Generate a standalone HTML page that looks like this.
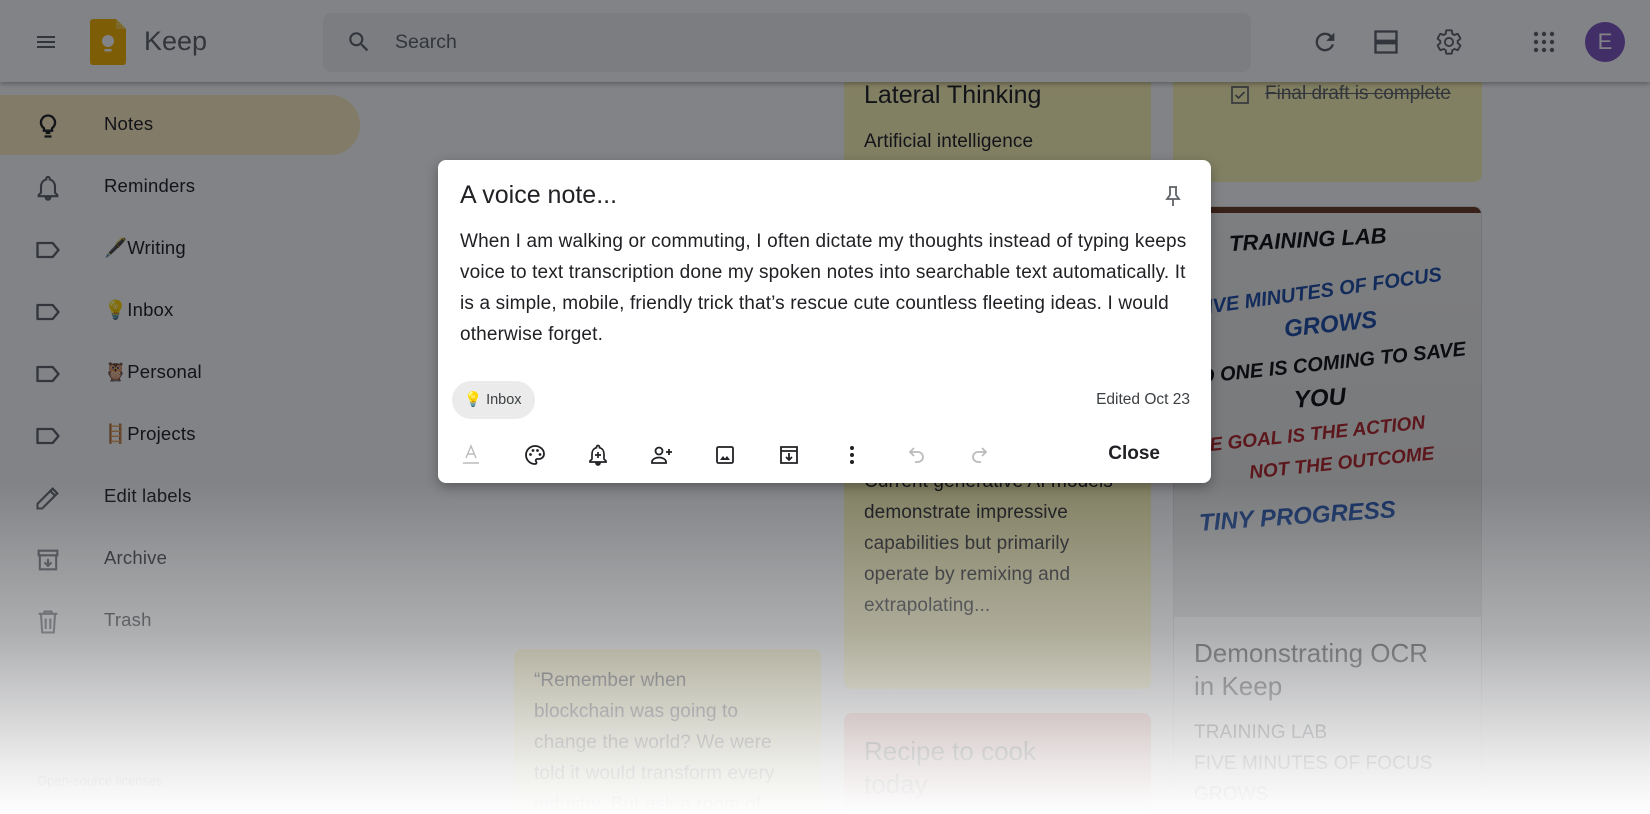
<!DOCTYPE html>
<html><head><meta charset="utf-8"><style>
*{margin:0;padding:0;box-sizing:border-box}
html{width:1650px;height:814px;overflow:hidden}
body{width:1650px;height:814px;overflow:hidden;background:#fff;font-family:"Liberation Sans","Noto Sans CJK SC",sans-serif;color:#202124;position:relative}
.abs{position:absolute}
.hdr{left:0;top:0;width:1650px;height:82px;background:#fff;box-shadow:0 2px 5px rgba(0,0,0,.3)}
.side .it{position:absolute;left:0;width:360px;height:60px}
.side .it svg{position:absolute;left:34px;top:18px}
.side .it span{position:absolute;left:104px;top:19px;font-size:18.5px;letter-spacing:.2px;color:#202124}
.card{position:absolute;border-radius:8px;overflow:hidden}
.y{background:#fff8b8}
.ct{font-size:19px;line-height:31px;color:#202124;letter-spacing:.1px}
.hw{position:absolute;font-family:"Liberation Sans",sans-serif;font-weight:bold;font-style:italic;white-space:nowrap}
.tb svg{position:absolute;top:443px}
</style></head><body>
<!-- cards -->
<div class="card y" style="left:844px;top:40px;width:307px;height:649px">
<div class="abs" style="left:20px;top:41px;font-size:25px">Lateral Thinking</div>
<div class="abs ct" style="left:20px;top:86px">Artificial intelligence</div>
<div class="abs ct" style="left:20px;top:426px;width:260px">Current generative AI models demonstrate impressive capabilities but primarily operate by remixing and extrapolating...</div>
</div>
<div class="card y" style="left:1173px;top:40px;width:309px;height:142px">
<svg class="abs" style="left:57px;top:45px" width="20" height="20" viewBox="0 0 20 20"><rect x="2" y="2" width="16" height="16" fill="none" stroke="#5f6368" stroke-width="1.6"/><path d="M5.5 10l3 3 6-6" fill="none" stroke="#5f6368" stroke-width="1.6"/></svg>
<div class="abs" style="left:92px;top:43px;font-size:19px;color:#5f6368;text-decoration:line-through">Final draft is complete</div>
</div>
<div class="card" style="left:1173px;top:206px;width:309px;height:640px;border:1px solid #e0e0e0;background:#fff">
<div class="abs" style="left:0;top:0;width:309px;height:410px;background:linear-gradient(#f4f4f2,#e9e9e7);border-top:6px solid #6b3a22">
<div class="hw" style="left:55px;top:14px;font-size:22px;color:#111;transform:rotate(-3deg)">TRAINING LAB</div>
<div class="hw" style="left:20px;top:68px;font-size:20px;color:#1f4fa8;transform:rotate(-8deg)">FIVE MINUTES OF FOCUS</div>
<div class="hw" style="left:110px;top:98px;font-size:24px;color:#1f4fa8;transform:rotate(-6deg)">GROWS</div>
<div class="hw" style="left:10px;top:140px;font-size:20px;color:#111;transform:rotate(-6deg)">NO ONE IS COMING TO SAVE</div>
<div class="hw" style="left:120px;top:172px;font-size:24px;color:#111;transform:rotate(-4deg)">YOU</div>
<div class="hw" style="left:10px;top:212px;font-size:19px;color:#b3262b;transform:rotate(-6deg)">THE GOAL IS THE ACTION</div>
<div class="hw" style="left:75px;top:240px;font-size:19px;color:#b3262b;transform:rotate(-6deg)">NOT THE OUTCOME</div>
<div class="hw" style="left:25px;top:290px;font-size:24px;color:#1f4fa8;transform:rotate(-4deg)">TINY PROGRESS</div>
</div>
<div class="abs" style="left:20px;top:430px;width:250px;font-size:26px;line-height:33px;color:#202124">Demonstrating OCR in Keep</div>
<div class="abs ct" style="left:20px;top:510px">TRAINING LAB<br>FIVE MINUTES OF FOCUS<br>GROWS</div>
</div>
<div class="card y" style="left:514px;top:649px;width:307px;height:165px">
<div class="abs ct" style="left:20px;top:16px;white-space:nowrap">“Remember when<br>blockchain was going to<br>change the world? We were<br>told it would transform every<br>industry. But ask a room of</div>
</div>
<div class="card" style="left:844px;top:713px;width:307px;height:101px;background:#faafa8">
<div class="abs" style="left:20px;top:22px;font-size:26px;line-height:33px;color:#202124">Recipe to cook<br>today</div>
</div>
<!-- header -->
<div class="abs hdr">
<svg class="abs" style="left:34px;top:30px" width="24" height="24" viewBox="0 0 24 24"><path d="M3 18h18v-2H3v2zm0-5h18v-2H3v2zm0-7v2h18V6H3z" fill="#5f6368"/></svg>
<svg class="abs" style="left:90px;top:19px" width="36" height="46" viewBox="0 0 36 46"><path d="M3 0h23l10 10v33a3 3 0 0 1-3 3H3a3 3 0 0 1-3-3V3a3 3 0 0 1 3-3z" fill="#f4b400"/><path d="M26 0v10h10z" fill="#f7cb4d"/><circle cx="18" cy="22" r="6" fill="#fff"/><rect x="14.5" y="30" width="7" height="2.5" fill="#fff"/></svg>
<div class="abs" style="left:144px;top:26px;font-size:27px;color:#5f6368">Keep</div>
<div class="abs" style="left:323px;top:13px;width:928px;height:59px;background:#f1f3f4;border-radius:8px"></div>
<svg class="abs" style="left:346px;top:29px" width="26" height="26" viewBox="0 0 24 24"><path d="M15.5 14h-.79l-.28-.27A6.47 6.47 0 0 0 16 9.5 6.5 6.5 0 1 0 9.5 16c1.61 0 3.09-.59 4.23-1.57l.27.28v.79l5 4.99L20.49 19l-4.99-5zm-6 0C7.01 14 5 11.99 5 9.5S7.01 5 9.5 5 14 7.01 14 9.5 11.99 14 9.5 14z" fill="#5f6368"/></svg>
<div class="abs" style="left:395px;top:31px;font-size:19.5px;color:#5f6368">Search</div>
<svg class="abs" style="left:1311px;top:28px" width="28" height="28" viewBox="0 0 24 24"><path d="M17.65 6.35A7.96 7.96 0 0 0 12 4a8 8 0 1 0 7.73 10h-2.08A6 6 0 1 1 12 6c1.66 0 3.14.69 4.22 1.78L13 11h7V4l-2.35 2.35z" fill="#5f6368"/></svg>
<svg class="abs" style="left:1372px;top:28px" width="28" height="28" viewBox="0 0 24 24"><path d="M3 3h18v8H3zM3 13h18v8H3z" fill="none" stroke="#5f6368" stroke-width="2"/></svg>
<svg class="abs" style="left:1435px;top:28px" width="28" height="28" viewBox="0 0 24 24"><path d="M19.43 12.98c.04-.32.07-.64.07-.98s-.03-.66-.07-.98l2.11-1.65c.19-.15.24-.42.12-.64l-2-3.46a.5.5 0 0 0-.61-.22l-2.49 1c-.52-.4-1.08-.73-1.69-.98l-.38-2.65A.49.49 0 0 0 14 2h-4c-.25 0-.46.18-.49.42l-.38 2.65c-.61.25-1.17.59-1.69.98l-2.49-1a.5.5 0 0 0-.61.22l-2 3.46c-.13.22-.07.49.12.64l2.11 1.65c-.04.32-.07.65-.07.98s.03.66.07.98l-2.11 1.65c-.19.15-.24.42-.12.64l2 3.46c.12.22.39.3.61.22l2.49-1c.52.4 1.08.73 1.69.98l.38 2.65c.03.24.24.42.49.42h4c.25 0 .46-.18.49-.42l.38-2.65c.61-.25 1.17-.59 1.69-.98l2.49 1c.23.09.49 0 .61-.22l2-3.46c.12-.22.07-.49-.12-.64l-2.11-1.65zM12 15.5a3.5 3.5 0 1 1 0-7 3.5 3.5 0 0 1 0 7z" fill="none" stroke="#5f6368" stroke-width="1.6"/></svg>
<svg class="abs" style="left:1532px;top:30px" width="24" height="24" viewBox="0 0 24 24" fill="#5f6368"><circle cx="4" cy="4" r="2.2"/><circle cx="12" cy="4" r="2.2"/><circle cx="20" cy="4" r="2.2"/><circle cx="4" cy="12" r="2.2"/><circle cx="12" cy="12" r="2.2"/><circle cx="20" cy="12" r="2.2"/><circle cx="4" cy="20" r="2.2"/><circle cx="12" cy="20" r="2.2"/><circle cx="20" cy="20" r="2.2"/></svg>
<div class="abs" style="left:1585px;top:22px;width:40px;height:40px;border-radius:50%;background:#7e57c2;color:#fff;font-size:22px;text-align:center;line-height:40px">E</div>
</div>
<!-- sidebar -->
<div class="side">
<div class="abs" style="left:0;top:95px;width:360px;height:60px;background:#feefc3;border-radius:0 30px 30px 0"></div>
<div class="it" style="top:94px"><svg width="28" height="28" viewBox="0 0 24 24"><path d="M9 21h6M10 18h4M12 3a6 6 0 0 0-3.5 10.9V16h7v-2.1A6 6 0 0 0 12 3z" fill="none" stroke="#202124" stroke-width="2"/></svg><span>Notes</span></div>
<div class="it" style="top:156px"><svg width="28" height="28" viewBox="0 0 24 24"><path d="M12 22a2 2 0 0 0 2-2h-4a2 2 0 0 0 2 2zm6-6v-5c0-3.07-1.64-5.64-4.5-6.32V4a1.5 1.5 0 0 0-3 0v.68C7.63 5.36 6 7.92 6 11v5l-2 2v1h16v-1l-2-2z" fill="none" stroke="#5f6368" stroke-width="1.8"/></svg><span>Reminders</span></div>
<div class="it" style="top:218px"><svg width="28" height="28" viewBox="0 0 24 24"><path d="M3 6h13l5 6-5 6H3z" fill="none" stroke="#5f6368" stroke-width="2" stroke-linejoin="round"/></svg><span>🖋️Writing</span></div>
<div class="it" style="top:280px"><svg width="28" height="28" viewBox="0 0 24 24"><path d="M3 6h13l5 6-5 6H3z" fill="none" stroke="#5f6368" stroke-width="2" stroke-linejoin="round"/></svg><span>💡Inbox</span></div>
<div class="it" style="top:342px"><svg width="28" height="28" viewBox="0 0 24 24"><path d="M3 6h13l5 6-5 6H3z" fill="none" stroke="#5f6368" stroke-width="2" stroke-linejoin="round"/></svg><span>🦉Personal</span></div>
<div class="it" style="top:404px"><svg width="28" height="28" viewBox="0 0 24 24"><path d="M3 6h13l5 6-5 6H3z" fill="none" stroke="#5f6368" stroke-width="2" stroke-linejoin="round"/></svg><span>🪜Projects</span></div>
<div class="it" style="top:466px"><svg width="28" height="28" viewBox="0 0 24 24"><path d="M3 21v-4L16 4l4 4L7 21zM14 6l4 4" fill="none" stroke="#5f6368" stroke-width="1.8"/></svg><span>Edit labels</span></div>
<div class="it" style="top:528px"><svg width="28" height="28" viewBox="0 0 24 24"><path d="M4 4h16v4H4zM5 8h14v12H5zM12 11v6M9 14l3 3 3-3" fill="none" stroke="#5f6368" stroke-width="1.8"/></svg><span>Archive</span></div>
<div class="it" style="top:590px"><svg width="28" height="28" viewBox="0 0 24 24"><path d="M4 5h16M9 5V3h6v2M6 5l1 16h10l1-16M10 9v9M14 9v9" fill="none" stroke="#5f6368" stroke-width="1.8"/></svg><span>Trash</span></div>
<div class="abs" style="left:37px;top:773px;font-size:13px;color:#5f6368">Open-source licenses</div>
</div>
<!-- scrim -->
<div class="abs" style="left:0;top:0;width:1650px;height:814px;background:rgba(6,8,14,0.5)"></div>
<!-- modal -->
<div class="abs" style="left:438px;top:160px;width:773px;height:323px;background:#fff;border-radius:8px;box-shadow:0 4px 12px rgba(0,0,0,.3)">
<div class="abs" style="left:22px;top:21px;font-size:25px;color:#202124">A voice note...</div>
<svg class="abs" style="left:723px;top:24px" width="24" height="24" viewBox="0 0 24 24"><path d="M8 3h8M9 3v8l-3 4h12l-3-4V3M12 15v7" fill="none" stroke="#5f6368" stroke-width="1.8"/></svg>
<div class="abs" style="left:22px;top:66px;width:736px;font-size:19px;letter-spacing:.15px;line-height:31px;color:#202124">When I am walking or commuting, I often dictate my thoughts instead of typing keeps voice to text transcription done my spoken notes into searchable text automatically. It is a simple, mobile, friendly trick that’s rescue cute countless fleeting ideas. I would otherwise forget.</div>
<div class="abs" style="left:14px;top:221px;width:83px;height:38px;border-radius:19px;background:#ebebeb;font-size:14.5px;line-height:38px;padding-left:12px;color:#3c4043">💡 Inbox</div>
<div class="abs" style="right:21px;top:231px;font-size:15.5px;color:#3c4043">Edited Oct 23</div>
<div class="abs" style="right:51px;top:283px;font-size:19px;font-weight:bold;color:#202124">Close</div>
</div>
<div class="tb">
<svg style="left:461px" width="20" height="22" viewBox="0 0 20 22"><path d="M5 15l5-12 5 12M7 11h6" fill="none" stroke="#bbb" stroke-width="1.4"/><path d="M2 20h16" stroke="#ccc" stroke-width="2"/></svg>
<svg style="left:523px" width="24" height="24" viewBox="0 0 24 24"><path d="M12 3a9 9 0 0 0 0 18c1 0 1.5-.7 1.5-1.5 0-.4-.2-.7-.4-1-.2-.3-.4-.6-.4-1 0-.8.7-1.5 1.5-1.5H16a5 5 0 0 0 5-5c0-4.4-4-8-9-8z" fill="none" stroke="#202124" stroke-width="1.8"/><circle cx="7.5" cy="11.5" r="1.4" fill="#202124"/><circle cx="10" cy="7.5" r="1.4" fill="#202124"/><circle cx="14.5" cy="7.5" r="1.4" fill="#202124"/><circle cx="17" cy="11.5" r="1.4" fill="#202124"/></svg>
<svg style="left:586px" width="24" height="24" viewBox="0 0 24 24"><path d="M12 22a2 2 0 0 0 2-2h-4a2 2 0 0 0 2 2zm6-6v-5c0-3.07-1.64-5.64-4.5-6.32V4a1.5 1.5 0 0 0-3 0v.68C7.63 5.36 6 7.92 6 11v5l-2 2v1h16v-1l-2-2zM12 9v6M9 12h6" fill="none" stroke="#202124" stroke-width="1.7"/></svg>
<svg style="left:650px" width="24" height="24" viewBox="0 0 24 24"><circle cx="9" cy="8" r="3.5" fill="none" stroke="#202124" stroke-width="1.8"/><path d="M2 19c0-3 4-4.5 7-4.5s7 1.5 7 4.5v1H2zM19 6v6M16 9h6" fill="none" stroke="#202124" stroke-width="1.8"/></svg>
<svg style="left:713px" width="24" height="24" viewBox="0 0 24 24"><rect x="4" y="4" width="16" height="16" rx="1.5" fill="none" stroke="#202124" stroke-width="1.8"/><path d="M7 17l3-4 2 2.5 2-2.5 3 4z" fill="#202124"/></svg>
<svg style="left:777px" width="24" height="24" viewBox="0 0 24 24"><path d="M4 4h16v16H4zM4 8h16M12 10v7M9 14l3 3 3-3" fill="none" stroke="#202124" stroke-width="1.8"/></svg>
<svg style="left:840px" width="24" height="24" viewBox="0 0 24 24" fill="#202124"><circle cx="12" cy="5" r="2"/><circle cx="12" cy="12" r="2"/><circle cx="12" cy="19" r="2"/></svg>
<svg style="left:905px" width="24" height="24" viewBox="0 0 24 24"><path d="M9 5L5 9l4 4M5 9h8a5 5 0 0 1 0 10h-3" fill="none" stroke="#bbb" stroke-width="1.8"/></svg>
<svg style="left:967px" width="24" height="24" viewBox="0 0 24 24"><path d="M15 5l4 4-4 4M19 9h-8a5 5 0 0 0 0 10h3" fill="none" stroke="#bbb" stroke-width="1.8"/></svg>
</div>
<!-- bottom fade -->
<div class="abs" style="left:0;top:484px;width:1650px;height:330px;background:linear-gradient(rgba(255,255,255,0),rgba(255,255,255,0.35) 45%,rgba(255,255,255,0.85) 85%,#fff)"></div>
</body></html>
